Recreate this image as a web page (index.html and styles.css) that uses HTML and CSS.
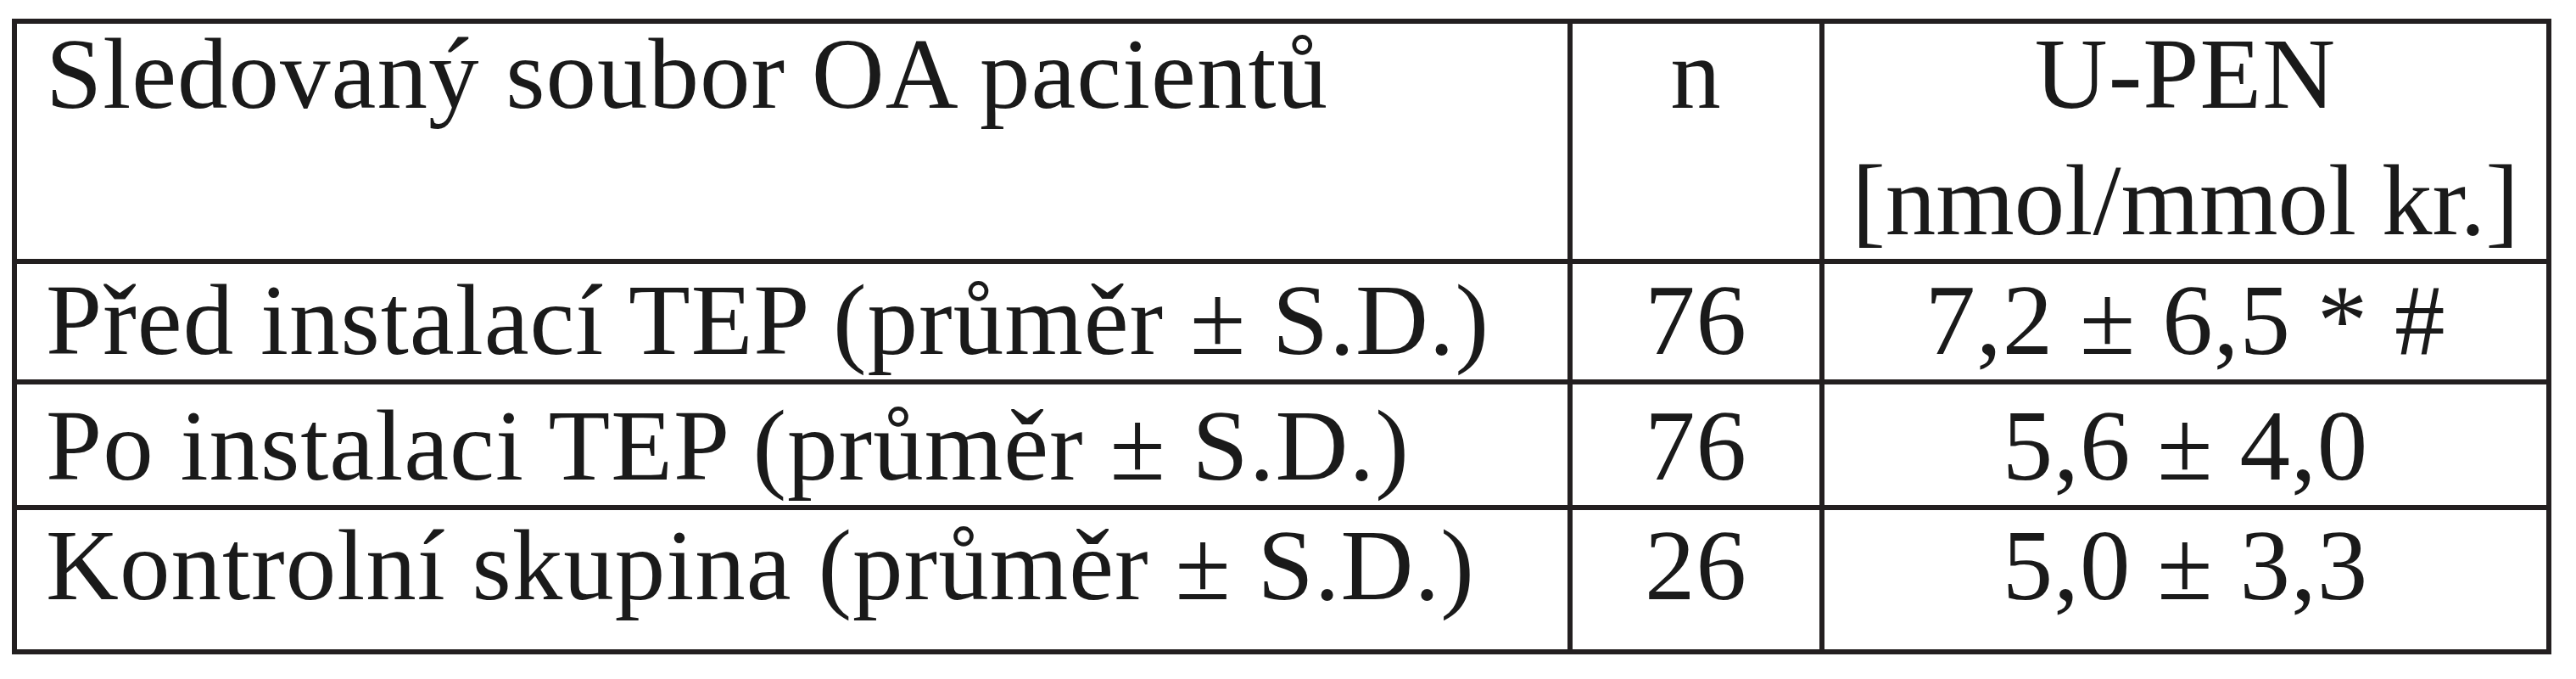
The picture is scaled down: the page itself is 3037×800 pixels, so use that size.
FILE: index.html
```html
<!DOCTYPE html>
<html lang="cs">
<head>
<meta charset="utf-8">
<title>U-PEN</title>
<link rel="stylesheet" href="styles.css">
</head>
<body>
<table class="data">
  <colgroup>
    <col class="c-label">
    <col class="c-n">
    <col class="c-val">
  </colgroup>
  <thead>
    <tr class="r-head">
      <th class="label">Sledovaný soubor OA pacientů</th>
      <th class="num">n</th>
      <th class="num">U-PEN<span class="unit">[nmol/mmol kr.]</span></th>
    </tr>
  </thead>
  <tbody>
    <tr class="r1">
      <td class="label">Před instalací TEP (průměr ± S.D.)</td>
      <td class="num">76</td>
      <td class="num">7,2 ± 6,5 * #</td>
    </tr>
    <tr class="r2">
      <td class="label">Po instalaci TEP (průměr ± S.D.)</td>
      <td class="num">76</td>
      <td class="num">5,6 ± 4,0</td>
    </tr>
    <tr class="r3">
      <td class="label">Kontrolní skupina (průměr ± S.D.)</td>
      <td class="num">26</td>
      <td class="num">5,0 ± 3,3</td>
    </tr>
  </tbody>
</table>
</body>
</html>
```

FILE: styles.css
```css
html, body {
  margin: 0;
  padding: 0;
  background: #ffffff;
}

.data {
  margin: 22px 0 0 14px;
  width: 2994px;
  table-layout: fixed;
  border-collapse: collapse;
  font-family: "Liberation Serif", "Times New Roman", serif;
  font-size: 119px;
  line-height: 119px;
  letter-spacing: 1px;
  color: #1a1a1a;
}

.c-label { width: 1834px; }
.c-n { width: 297px; }
.c-val { width: 857px; }

.data th,
.data td {
  border: 6px solid #231f20;
  padding: 0;
  vertical-align: top;
  font-weight: normal;
  white-space: nowrap;
  box-sizing: border-box;
}

.label {
  text-align: left;
}

.data .label {
  padding-left: 34px;
}

.num {
  text-align: center;
}

.unit {
  display: block;
  margin-top: 30px;
  letter-spacing: 0;
}

.r-head th { height: 283px; padding-top: 0; }
.r1 td { height: 142px; padding-top: 7px; }
.r2 td { height: 148px; padding-top: 13px; }
.r3 td { height: 170px; padding-top: 6px; }
```
